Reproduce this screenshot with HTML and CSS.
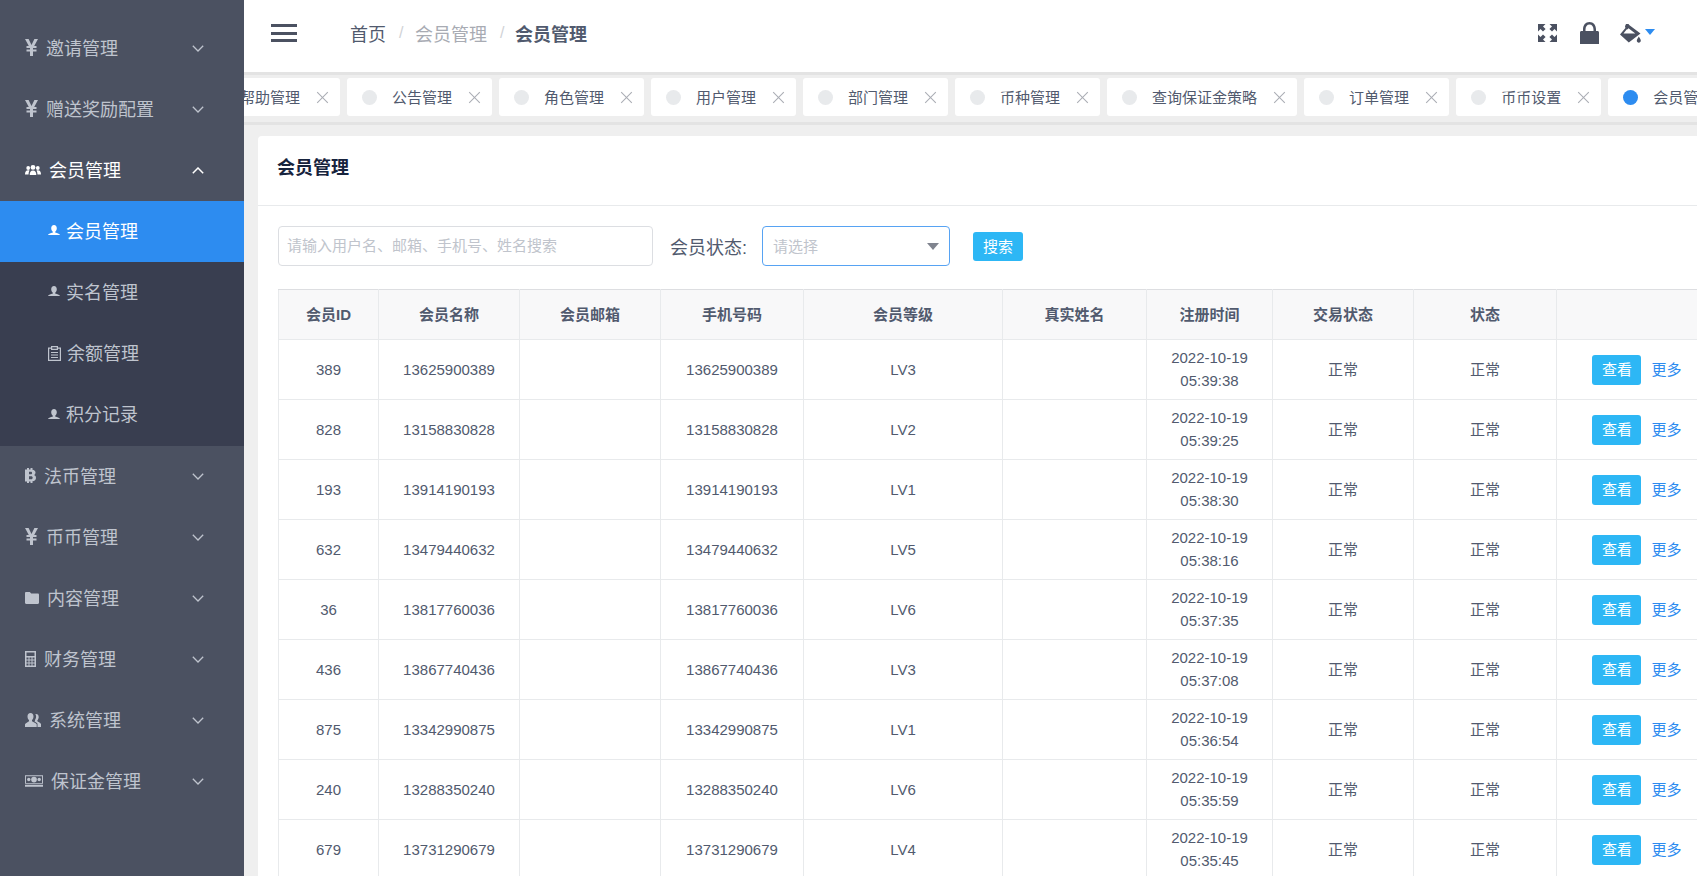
FILE: index.html
```html
<!DOCTYPE html>
<html lang="zh-CN">
<head>
<meta charset="utf-8">
<title>会员管理</title>
<link rel="stylesheet" href="styles.css">
</head>
<body>
<svg class="defs" aria-hidden="true">
  <symbol id="i-yen" viewBox="0 0 13 17"><path d="M0 0h3.600l2.900 6 2.900-6H13L9.200 7h2.300v2H8v1.400h3.500v2H8V17H5v-4.600H1.500v-2H5V9H1.500V7h2.300z"/></symbol>
  <symbol id="i-users3" viewBox="0 0 16 10"><circle cx="8" cy="2.400" r="2.400"/><path d="M4.700 10c0-3 1-4.600 3.300-4.600s3.300 1.600 3.300 4.600z"/><circle cx="3.200" cy="3" r="1.900"/><path d="M0 9.500c0-2.700.8-4.300 3.200-4.300.6 0 1 .1 1.300.3-.6 1-.9 2.300-1 4z"/><circle cx="12.800" cy="3" r="1.900"/><path d="M16 9.500c0-2.700-.8-4.300-3.200-4.300-.6 0-1 .1-1.300.3.600 1 .9 2.300 1 4z"/></symbol>
  <symbol id="i-user" viewBox="0 0 12 11"><path d="M6 0c1.800 0 2.800 1.300 2.800 3.200 0 1.500-.7 2.800-1.500 3.400v1c.4.500 3.800.8 4.700 2.400H0c.9-1.600 4.300-1.900 4.700-2.400v-1C3.900 6 3.200 4.700 3.200 3.200 3.200 1.300 4.200 0 6 0z"/></symbol>
  <symbol id="i-doc" viewBox="0 0 13 15"><path fill-rule="evenodd" d="M0 1.500h3V0h7v1.500h3V15H0zM1.200 2.700v11.100h10.600V2.700H10V4H3V2.700zM4.200 1.200V2.800h4.600V1.200zM3 6h7v1H3zM3 8.500h7v1H3zM3 11h7v1H3z"/></symbol>
  <symbol id="i-btc" viewBox="0 0 11 15"><path fill-rule="evenodd" d="M2 0h2v1.500h1.500V0h2v1.700C9.300 2 10.500 3 10.500 4.500c0 1.200-.6 2.100-1.500 2.600 1.200.4 2 1.400 2 2.800 0 2-1.400 3.100-3.500 3.300V15h-2v-1.500H4V15H2v-1.500H0V1.500h2zM4 3.800v2.500h1.800c.8 0 1.300-.5 1.300-1.300s-.5-1.200-1.300-1.200zM4 8.300v3h2.200c.9 0 1.500-.6 1.500-1.500s-.6-1.500-1.500-1.500z"/></symbol>
  <symbol id="i-folder" viewBox="0 0 14 12"><path d="M0 1.200C0 .5.500 0 1.200 0h3.600l1.400 1.600h6.600c.7 0 1.200.5 1.200 1.200v8c0 .7-.5 1.200-1.200 1.200H1.200C.5 12 0 11.500 0 10.800z"/></symbol>
  <symbol id="i-calc" viewBox="0 0 11 16"><path fill-rule="evenodd" d="M0 0h11v16H0zM1.500 1.500v3.500h8V1.500zM1.500 6.500v2h2v-2zM4.500 6.500v2h2v-2zM7.500 6.500v2h2v-2zM1.500 9.500v2h2v-2zM4.500 9.500v2h2v-2zM7.500 9.500v2h2v-2zM1.500 12.500v2h2v-2zM4.500 12.500v2h2v-2zM7.500 12.500v2h2v-2z"/></symbol>
  <symbol id="i-group" viewBox="0 0 16 14"><path d="M5.500 0c1.900 0 3 1.500 3 3.500 0 1.500-.7 3-1.500 3.600v1.100c.6.700 3.800 1.300 4.700 3.100V14H0v-2.700c.9-1.800 3.400-2.400 4-3.100V7.100C3.200 6.500 2.500 5 2.500 3.500c0-2 1.100-3.500 3-3.500z"/><path d="M11 1c1.700 0 2.700 1.300 2.700 3.100 0 1.300-.6 2.600-1.300 3.200v1c.5.600 2.800 1.200 3.600 2.700V14h-3.500v-3.200c-.6-1-1.900-1.700-2.900-2.300.3-.8.600-1.300.6-2.100.7-.7.900-1.900.9-2.900 0-1-.3-1.700-.7-2.300.200-.1.400-.2.600-.2z"/></symbol>
  <symbol id="i-money" viewBox="0 0 19 12"><path fill-rule="evenodd" d="M0 0h19v9H0zM1 1v7h17V1zM0 10h19v2H0z"/><circle cx="9.500" cy="4.500" r="3"/><circle cx="4" cy="4.500" r="1.800"/><circle cx="15" cy="4.500" r="1.800"/></symbol>
  <symbol id="i-down" viewBox="0 0 12 7"><path d="M.8.800 6 6l5.200-5.200" fill="none" stroke="currentColor" stroke-width="1.300"/></symbol>
  <symbol id="i-up" viewBox="0 0 12 7"><path d="M.8 6.200 6 1l5.200 5.200" fill="none" stroke="currentColor" stroke-width="1.500"/></symbol>
  <symbol id="i-expand" viewBox="0 0 19 18"><path d="M0 0h7.500L5 2.500l2.600 2.500-2.600 2.600L2.500 5 0 7.500zM19 0v7.500L16.500 5 14 7.600 11.400 5 14 2.500 11.500 0zM0 18v-7.500L2.500 13 5 10.400 7.600 13 5 15.500 7.500 18zM19 18h-7.500l2.500-2.500-2.600-2.500 2.600-2.600 2.500 2.600 2.500-2.500z"/></symbol>
  <symbol id="i-lock" viewBox="0 0 19 22"><path fill-rule="evenodd" d="M3 9V7.500C3 3 5.500 0 9.500 0S16 3 16 7.500V9h1.500c.9 0 1.500.6 1.500 1.500V22H0V10.500C0 9.600.6 9 1.500 9zM5.500 9h8V7.500c0-3-1.500-5-4-5s-4 2-4 5z"/></symbol>
  <symbol id="i-bucket" viewBox="0 0 22 19"><path fill-rule="evenodd" d="M6 0h2.500l1 1.200L20.500 9.500 8.800 18.500 0 10.500 5.400 4 5 2.200zM6.600 5.600 3.500 9.500h11.800L8.500 4.200l-.9 1.100z"/><path d="M18.800 12.500c1 1.600 2 2.800 2 4.100 0 1.300-.9 2.100-2 2.100s-2-.8-2-2.100c0-1.300 1-2.500 2-4.100z"/></symbol>
</svg>

<div class="app">
  <aside class="sidebar">
    <nav class="menu">
      <a class="menu-item"><svg class="ic ic-yen"><use href="#i-yen"/></svg><span class="label">邀请管理</span><svg class="chev"><use href="#i-down"/></svg></a>
      <a class="menu-item"><svg class="ic ic-yen"><use href="#i-yen"/></svg><span class="label">赠送奖励配置</span><svg class="chev"><use href="#i-down"/></svg></a>
      <a class="menu-item is-open"><svg class="ic ic-users"><use href="#i-users3"/></svg><span class="label">会员管理</span><svg class="chev"><use href="#i-up"/></svg></a>
      <div class="submenu">
        <a class="sub-item is-active"><svg class="ic ic-user"><use href="#i-user"/></svg><span class="label">会员管理</span></a>
        <a class="sub-item"><svg class="ic ic-user"><use href="#i-user"/></svg><span class="label">实名管理</span></a>
        <a class="sub-item"><svg class="ic ic-doc"><use href="#i-doc"/></svg><span class="label">余额管理</span></a>
        <a class="sub-item"><svg class="ic ic-user"><use href="#i-user"/></svg><span class="label">积分记录</span></a>
      </div>
      <a class="menu-item"><svg class="ic ic-btc"><use href="#i-btc"/></svg><span class="label">法币管理</span><svg class="chev"><use href="#i-down"/></svg></a>
      <a class="menu-item"><svg class="ic ic-yen"><use href="#i-yen"/></svg><span class="label">币币管理</span><svg class="chev"><use href="#i-down"/></svg></a>
      <a class="menu-item"><svg class="ic ic-folder"><use href="#i-folder"/></svg><span class="label">内容管理</span><svg class="chev"><use href="#i-down"/></svg></a>
      <a class="menu-item"><svg class="ic ic-calc"><use href="#i-calc"/></svg><span class="label">财务管理</span><svg class="chev"><use href="#i-down"/></svg></a>
      <a class="menu-item"><svg class="ic ic-group"><use href="#i-group"/></svg><span class="label">系统管理</span><svg class="chev"><use href="#i-down"/></svg></a>
      <a class="menu-item"><svg class="ic ic-money"><use href="#i-money"/></svg><span class="label">保证金管理</span><svg class="chev"><use href="#i-down"/></svg></a>
    </nav>
  </aside>

  <main class="main">
    <header class="topbar">
      <button class="burger" aria-label="menu"><span></span><span></span><span></span></button>
      <ol class="crumbs">
        <li class="crumb-home">首页</li>
        <li class="crumb-sep">/</li>
        <li class="crumb-mid">会员管理</li>
        <li class="crumb-sep">/</li>
        <li class="crumb-cur">会员管理</li>
      </ol>
      <div class="top-actions">
        <svg class="ti ti-expand"><use href="#i-expand"/></svg>
        <svg class="ti ti-lock"><use href="#i-lock"/></svg>
        <div class="theme"><svg class="ti ti-bucket"><use href="#i-bucket"/></svg><span class="caret"></span></div>
      </div>
    </header>

    <div class="tabs-bar">
      <div class="tabs">
        <div class="tab"><i class="dot"></i><span class="tab-name">帮助管理</span><span class="tab-x"></span></div>
        <div class="tab"><i class="dot"></i><span class="tab-name">公告管理</span><span class="tab-x"></span></div>
        <div class="tab"><i class="dot"></i><span class="tab-name">角色管理</span><span class="tab-x"></span></div>
        <div class="tab"><i class="dot"></i><span class="tab-name">用户管理</span><span class="tab-x"></span></div>
        <div class="tab"><i class="dot"></i><span class="tab-name">部门管理</span><span class="tab-x"></span></div>
        <div class="tab"><i class="dot"></i><span class="tab-name">币种管理</span><span class="tab-x"></span></div>
        <div class="tab"><i class="dot"></i><span class="tab-name">查询保证金策略</span><span class="tab-x"></span></div>
        <div class="tab"><i class="dot"></i><span class="tab-name">订单管理</span><span class="tab-x"></span></div>
        <div class="tab"><i class="dot"></i><span class="tab-name">币币设置</span><span class="tab-x"></span></div>
        <div class="tab is-current"><i class="dot"></i><span class="tab-name">会员管理</span><span class="tab-x"></span></div>
      </div>
    </div>

    <section class="card">
      <div class="card-head">会员管理</div>
      <div class="card-body">
        <div class="filters">
          <div class="input">请输入用户名、邮箱、手机号、姓名搜索</div>
          <span class="filter-label">会员状态:</span>
          <div class="select"><span>请选择</span><i class="select-arrow"></i></div>
          <button class="btn btn-search">搜索</button>
        </div>
        <table class="table">
          <colgroup>
            <col class="c1"><col class="c2"><col class="c3"><col class="c4"><col class="c5"><col class="c6"><col class="c7"><col class="c8"><col class="c9"><col class="c10">
          </colgroup>
          <thead>
            <tr><th>会员ID</th><th>会员名称</th><th>会员邮箱</th><th>手机号码</th><th>会员等级</th><th>真实姓名</th><th>注册时间</th><th>交易状态</th><th>状态</th><th></th></tr>
          </thead>
          <tbody>
            <tr><td>389</td><td>13625900389</td><td></td><td>13625900389</td><td>LV3</td><td></td><td class="date">2022-10-19<br>05:39:38</td><td>正常</td><td>正常</td><td><button class="btn">查看</button><a class="more">更多</a></td></tr>
            <tr><td>828</td><td>13158830828</td><td></td><td>13158830828</td><td>LV2</td><td></td><td class="date">2022-10-19<br>05:39:25</td><td>正常</td><td>正常</td><td><button class="btn">查看</button><a class="more">更多</a></td></tr>
            <tr><td>193</td><td>13914190193</td><td></td><td>13914190193</td><td>LV1</td><td></td><td class="date">2022-10-19<br>05:38:30</td><td>正常</td><td>正常</td><td><button class="btn">查看</button><a class="more">更多</a></td></tr>
            <tr><td>632</td><td>13479440632</td><td></td><td>13479440632</td><td>LV5</td><td></td><td class="date">2022-10-19<br>05:38:16</td><td>正常</td><td>正常</td><td><button class="btn">查看</button><a class="more">更多</a></td></tr>
            <tr><td>36</td><td>13817760036</td><td></td><td>13817760036</td><td>LV6</td><td></td><td class="date">2022-10-19<br>05:37:35</td><td>正常</td><td>正常</td><td><button class="btn">查看</button><a class="more">更多</a></td></tr>
            <tr><td>436</td><td>13867740436</td><td></td><td>13867740436</td><td>LV3</td><td></td><td class="date">2022-10-19<br>05:37:08</td><td>正常</td><td>正常</td><td><button class="btn">查看</button><a class="more">更多</a></td></tr>
            <tr><td>875</td><td>13342990875</td><td></td><td>13342990875</td><td>LV1</td><td></td><td class="date">2022-10-19<br>05:36:54</td><td>正常</td><td>正常</td><td><button class="btn">查看</button><a class="more">更多</a></td></tr>
            <tr><td>240</td><td>13288350240</td><td></td><td>13288350240</td><td>LV6</td><td></td><td class="date">2022-10-19<br>05:35:59</td><td>正常</td><td>正常</td><td><button class="btn">查看</button><a class="more">更多</a></td></tr>
            <tr><td>679</td><td>13731290679</td><td></td><td>13731290679</td><td>LV4</td><td></td><td class="date">2022-10-19<br>05:35:45</td><td>正常</td><td>正常</td><td><button class="btn">查看</button><a class="more">更多</a></td></tr>
          </tbody>
        </table>
      </div>
    </section>
  </main>
</div>
</body>
</html>
```

FILE: styles.css
```css
* { box-sizing: border-box; }
html, body { height: 100%; }
body {
  margin: 0;
  overflow: hidden;
  font-family: "Liberation Sans", "Noto Sans CJK SC", sans-serif;
  color: #515a6e;
  background: #efefef;
}
.defs { display: none; }
.app { display: flex; height: 876px; overflow: hidden; }

/* sidebar */
.sidebar {
  flex: 0 0 244px;
  background: #4b5161;
  padding-top: 18px;
  color: #bfc4ce;
  font-size: 18px;
}
.menu-item, .sub-item { display: flex; align-items: center; }
.menu-item { height: 61px; padding: 0 40px 0 25px; }
.menu-item.is-open { color: #fff; }
.menu-item .ic { margin-right: 8px; margin-bottom: 2px; }
.sub-item { height: 61.25px; padding-left: 48px; }
.sub-item .ic { margin-right: 6px; margin-bottom: 2px; }
.submenu { background: #393e50; }
.sub-item.is-active { background: #2d8cf0; color: #fff; }
.label { flex: 1; white-space: nowrap; padding-bottom: 4px; }
.ic { fill: currentColor; flex: none; }
.ic-yen { width: 13px; height: 17px; }
.ic-users { width: 16px; height: 10px; }
.ic-user { width: 12px; height: 11px; }
.ic-doc { width: 13px; height: 15px; }
.ic-btc { width: 11px; height: 15px; }
.ic-folder { width: 14px; height: 12px; }
.ic-calc { width: 11px; height: 16px; }
.ic-group { width: 16px; height: 14px; }
.ic-money { width: 18px; height: 12px; }
.chev { width: 12px; height: 7px; flex: none; }

/* main */
.main { flex: 1; min-width: 0; overflow: hidden; background: #efefef; }
.topbar {
  display: flex;
  align-items: center;
  height: 72px;
  background: #fff;
  padding: 0 42px 6px 27px;
}
.burger {
  display: flex;
  flex-direction: column;
  justify-content: space-between;
  width: 26px;
  height: 18px;
  padding: 0;
  border: 0;
  background: none;
}
.burger span { display: block; height: 3px; background: #4b5161; }
.crumbs {
  display: flex;
  align-items: center;
  list-style: none;
  margin: 0 0 0 53px;
  padding: 0;
  font-size: 18px;
}
.crumb-home { color: #515a6e; }
.crumb-mid { color: #a8abb3; }
.crumb-sep { color: #d0d2d6; margin: 0 10px 0 13px; font-size: 16px; width: 6px; }
.crumb-cur { margin-left: -1px; color: #515a6e; font-weight: 700; }
.top-actions { display: flex; align-items: center; margin-left: auto; }
.ti { fill: #4b5161; flex: none; }
.ti-expand { width: 19px; height: 18px; }
.ti-lock { width: 19px; height: 22px; margin-left: 23px; }
.theme { display: flex; align-items: center; margin-left: 21px; }
.ti-bucket { width: 22px; height: 19px; }
.caret {
  width: 0;
  height: 0;
  margin: 0 0 3px 3px;
  border-left: 5px solid transparent;
  border-right: 5px solid transparent;
  border-top: 6px solid #2d8cf0;
}

/* tabs */
.tabs-bar {
  height: 53px;
  background: #eee;
  border-top: 3px solid #e3e3e3;
  border-bottom: 3px solid #e3e3e3;
  padding-top: 3px;
  overflow: hidden;
}
.tabs { display: flex; gap: 7px; margin-left: -49px; }
.tab {
  flex: none;
  display: flex;
  align-items: center;
  height: 38px;
  padding: 0 12px 0 15px;
  background: #fff;
  border-radius: 3px;
  color: #515a6e;
}
.dot {
  width: 15px;
  height: 15px;
  border-radius: 50%;
  background: #e8eaec;
  margin-right: 15px;
}
.is-current .dot { background: #2d8cf0; }
.tab-name { font-size: 15px; white-space: nowrap; padding-bottom: 2px; }
.tab-x {
  position: relative;
  width: 11px;
  height: 11px;
  margin-left: 17px;
}
.tab-x::before, .tab-x::after {
  content: "";
  position: absolute;
  left: 5px;
  top: -2px;
  width: 1px;
  height: 15px;
  background: #a9acb3;
  transform: rotate(45deg);
}
.tab-x::after { transform: rotate(-45deg); }

/* card */
.card {
  width: 1500px;
  margin: 11px 0 0 14px;
  background: #fff;
  border-radius: 4px;
}
.card-head {
  height: 70px;
  padding: 0 19px;
  line-height: 64px;
  border-bottom: 1px solid #e8eaec;
  font-size: 18px;
  font-weight: 700;
  color: #17233d;
}
.card-body { padding: 20px 20px 0; }
.filters { display: flex; align-items: center; height: 40px; }
.input {
  width: 375px;
  height: 40px;
  padding: 0 8px;
  line-height: 38px;
  border: 1px solid #dcdee2;
  border-radius: 4px;
  font-size: 15px;
  color: #c0c4cc;
  white-space: nowrap;
}
.filter-label { margin: 0 15px 0 17px; width: 77px; font-size: 18px; color: #515a6e; white-space: nowrap; }
.select {
  display: flex;
  align-items: center;
  justify-content: space-between;
  width: 188px;
  height: 40px;
  padding: 0 10px 0 10px;
  border: 1px solid #57a3f3;
  border-radius: 4px;
  font-size: 15px;
  color: #c0c4cc;
}
.select span { padding-bottom: 2px; }
.select-arrow {
  width: 0;
  height: 0;
  border-left: 6px solid transparent;
  border-right: 6px solid transparent;
  border-top: 7px solid #80848f;
}
.btn {
  width: 49px;
  height: 30px;
  padding: 0;
  border: 0;
  border-radius: 3px;
  background: #2db7f5;
  color: #fff;
  font: inherit;
  font-size: 15px;
}
.btn-search { width: 50px; height: 29px; margin-left: 23px; padding-bottom: 2px; }

/* table */
.table {
  table-layout: fixed;
  border-collapse: collapse;
  width: 1439px;
  margin-top: 23px;
  font-size: 15px;
  color: #515a6e;
}
.c1 { width: 100px; }
.c2, .c3 { width: 141px; }
.c4 { width: 143px; }
.c5 { width: 199px; }
.c6 { width: 144px; }
.c7 { width: 126px; }
.c8 { width: 141px; }
.c9 { width: 143px; }
.c10 { width: 161px; }
.table th, .table td {
  border: 1px solid #e8eaec;
  padding: 0;
  text-align: center;
}
.table th {
  height: 50px;
  padding-bottom: 2px;
  background: #f8f8f9;
  border-top: 1px solid #dddee1;
  font-weight: 700;
}
.table td { height: 60px; line-height: 23px; }
.table td.date { padding-bottom: 2px; }
.more { margin-left: 10px; color: #2d8cf0; }
```
